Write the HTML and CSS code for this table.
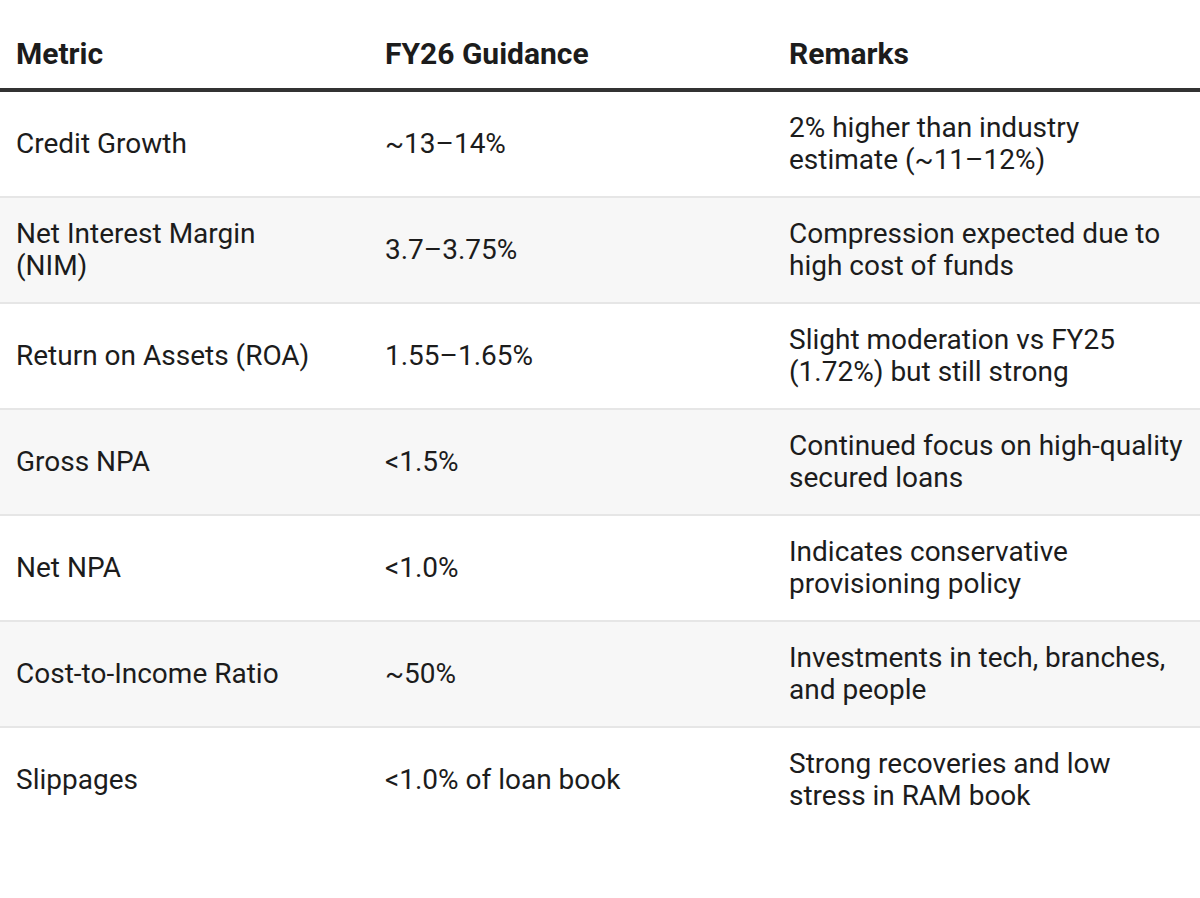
FILE: index.html
```html
<!DOCTYPE html>
<html>
<head>
<meta charset="utf-8">
<link rel="stylesheet" href="styles.css">
</head>
<body>
<table class="guidance">
  <colgroup>
    <col class="c1"><col class="c2"><col class="c3">
  </colgroup>
  <thead>
    <tr><th class="first">Metric</th><th>FY26 Guidance</th><th>Remarks</th></tr>
  </thead>
  <tbody>
    <tr><td class="first">Credit Growth</td><td>~13–14%</td><td>2% higher than industry estimate (~11–12%)</td></tr>
    <tr><td class="first">Net Interest Margin (NIM)</td><td>3.7–3.75%</td><td>Compression expected due to high cost of funds</td></tr>
    <tr><td class="first">Return on Assets (ROA)</td><td>1.55–1.65%</td><td>Slight moderation vs FY25 (1.72%) but still strong</td></tr>
    <tr><td class="first">Gross NPA</td><td>&lt;1.5%</td><td>Continued focus on high-quality secured loans</td></tr>
    <tr><td class="first">Net NPA</td><td>&lt;1.0%</td><td>Indicates conservative provisioning policy</td></tr>
    <tr><td class="first">Cost-to-Income Ratio</td><td>~50%</td><td>Investments in tech, branches, and people</td></tr>
    <tr><td class="first">Slippages</td><td>&lt;1.0% of loan book</td><td>Strong recoveries and low stress in RAM book</td></tr>
  </tbody>
</table>
</body>
</html>
```
FILE: styles.css
```css
html, body {
  margin: 0;
  padding: 0;
  background: #ffffff;
}
body {
  font-family: Roboto, "Liberation Sans", sans-serif;
  color: #1c1c1c;
}
.guidance {
  width: 1200px;
  border-collapse: collapse;
  table-layout: fixed;
  font-size: 28px;
  line-height: 32px;
}
.c1 { width: 369px; }
.c2 { width: 404px; }
.c3 { width: 427px; }
.guidance th {
  text-align: left;
  font-size: 30px;
  line-height: 35px;
  font-weight: 700;
  padding: 36px 16px 17px;
  border-bottom: 4px solid #333333;
  vertical-align: bottom;
}
.guidance td {
  padding: 20px 16px 20px;
  vertical-align: middle;
  border-bottom: 2px solid #e6e6e6;
}
.guidance .first {
  padding-right: 40px;
}
.guidance tbody tr:nth-child(even) td {
  background: #f7f7f7;
}
.guidance tbody tr:last-child td {
  border-bottom: none;
}
```
